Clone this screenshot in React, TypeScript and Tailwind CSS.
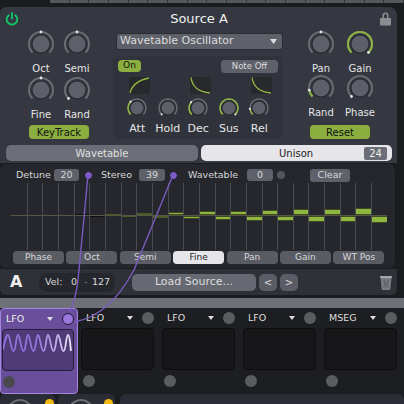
import { Fragment } from 'react';

// Arc helpers for the knobs. Angles are degrees from 12 o'clock, clockwise.
const pt = (c: number, r: number, a: number) => {
  const t = ((a - 90) * Math.PI) / 180;
  return [c + r * Math.cos(t), c + r * Math.sin(t)];
};
const arc = (c: number, r: number, from: number, to: number) => {
  const [x1, y1] = pt(c, r, from);
  const [x2, y2] = pt(c, r, to);
  return `M${x1} ${y1}A${r} ${r} 0 ${to - from > 180 ? 1 : 0} 1 ${x2} ${y2}`;
};

function Knob({ size = 30, value, on = false }: { size?: number; value: number; on?: boolean }) {
  const c = size / 2;
  const r = size === 30 ? 12 : 9;
  const inner = size === 30 ? 8.5 : 6.5;
  const [dx, dy] = pt(c, r, value);
  return (
    <svg width={size} height={size} className="block">
      <path d={arc(c, r, -135, 135)} fill="none" stroke="#6b6d72" strokeWidth={size === 30 ? 2 : 1.5} />
      {on && <path d={arc(c, r, -135, value)} fill="none" stroke="#8fb63f" strokeWidth={size === 30 ? 2 : 1.5} />}
      <circle cx={c} cy={c} r={inner + 1} fill="#26282d" />
      <circle cx={c} cy={c} r={inner} fill="#5e6069" />
      <circle cx={dx} cy={dy} r={size === 30 ? 1.4 : 1.1} fill="#e4e4e4" />
    </svg>
  );
}

function KnobLabel({ children, big = false }: { children: string; big?: boolean }) {
  return (
    <div
      className={
        big
          ? 'w-[30px] h-[14px] flex justify-center items-center text-[11px] text-[#e6e6e6] whitespace-nowrap'
          : 'w-[30px] h-[14px] flex justify-center items-center text-[10px] text-[#e6e6e6] whitespace-nowrap'
      }
    >
      {children}
    </div>
  );
}

function Env({ d, pad = false }: { d: string; pad?: boolean }) {
  return (
    <div className={pad ? 'flex justify-center pl-[5px]' : 'flex justify-center'}>
      {d && (
        <svg width="21" height="17" className="block bg-[#28292d] rounded-[2px]">
          <path d={d} fill="none" stroke="#8fb63f" strokeWidth="1.3" />
        </svg>
      )}
    </div>
  );
}

const midKnobs = [
  { label: 'Att', value: -45, on: true },
  { label: 'Hold', value: -135, on: false },
  { label: 'Dec', value: -50, on: true },
  { label: 'Sus', value: 135, on: true },
  { label: 'Rel', value: -95, on: true },
];

// 24 unison voices, first four flat on the line, then alternating up and down
const voices = Array.from({ length: 24 }, (_, i) => {
  const t = Math.max(0, (i - 3) / 20);
  return { i, up: i % 2 === 0, h: i < 4 ? 0 : Math.max(1, Math.round(t * 6)), t };
});

function Bar({ h, t }: { h: number; t: number }) {
  const bright = t > 0.3;
  return (
    <div
      className={bright ? 'bg-[#8fb63f] border-y border-[#3f4a22]' : t > 0.12 ? 'bg-[#4e5a2a]' : 'bg-[#101010]'}
      style={{ height: bright ? h + 1 : h }}
    />
  );
}

const modNames = ['LFO', 'LFO', 'LFO', 'LFO', 'MSEG'];

function Pill({ children, className }: { children: React.ReactNode; className: string }) {
  return <div className={`flex items-center justify-center ${className}`}>{children}</div>;
}

export default function App() {
  return (
    <div className="relative w-[404px] h-[404px] overflow-hidden bg-[#1b1c1f] [font-family:'DejaVu_Sans',sans-serif]">
      {/* ruler strip on top */}
      <div className="ml-[50px] h-[3px] flex bg-[#55575c]">
        {Array.from({ length: 18 }, (_, i) => (
          <div key={i} className="w-[20.7px] border-r border-[#35363a]" />
        ))}
      </div>

      <div className="mt-[4px] w-[397px] h-[156px] bg-[#353841] rounded-tr-[8px] rounded-tl-[6px]">
        {/* title */}
        <div className="h-[23px] flex items-center justify-between pl-[5px] pr-[5px]">
          <svg width="14" height="14" viewBox="0 0 14 14" fill="none" stroke="#10c868" strokeWidth="1.8" strokeLinecap="round">
            <path d="M7 1v5.5" />
            <path d="M3.7 3.2a5.3 5.3 0 1 0 6.6 0" />
          </svg>
          <div className="text-[13px] text-[#f0f0f0]">Source A</div>
          <svg width="13" height="15" viewBox="0 0 13 15" fill="#8b8d90">
            <path d="M3.5 7V4.4a3 3 0 0 1 6 0V7H8V4.4a1.5 1.5 0 0 0-3 0V7z" />
            <rect x="1" y="7" width="11" height="7.5" rx="1" />
          </svg>
        </div>

        <div className="flex h-[110px] mt-[-1px]">
          {/* left knobs */}
          <div className="w-[113px] pl-[26px]">
            <div className="flex gap-[6px]">
              <Knob value={0} />
              <Knob value={0} />
            </div>
            <div className="flex gap-[6px] mt-[2px]">
              <KnobLabel>Oct</KnobLabel>
              <KnobLabel>Semi</KnobLabel>
            </div>
            <div className="flex gap-[6px]">
              <Knob value={0} />
              <Knob value={-135} />
            </div>
            <div className="flex gap-[6px] mt-[2px]">
              <KnobLabel>Fine</KnobLabel>
              <KnobLabel>Rand</KnobLabel>
            </div>
            <div className="ml-[3px] mt-[4px] w-[60px] h-[14px] rounded-[4px] bg-[#8aaf3f] text-[#111] text-[10px] flex items-center justify-center">
              KeyTrack
            </div>
          </div>

          {/* centre column */}
          <div className="w-[170px]">
            <div className="ml-[3px] mt-[4px] h-[17px] flex items-center justify-between pl-[3px] pr-[5px] rounded-[3px] bg-[#5f616a] border border-[#2a2c31] text-[11px] text-[#dcdcdc]">
              <span>Wavetable Oscillator</span>
              <svg width="7" height="5" viewBox="0 0 7 5" fill="#dcdcdc">
                <path d="M0 0h7L3.5 5z" />
              </svg>
            </div>
            <div className="mt-[6px] h-[83px] rounded-[6px] bg-[#30333b]">
              <div className="flex justify-between px-[5px] pt-[4px]">
                <Pill className="w-[23px] h-[12px] rounded-[4px] bg-[#8aaf3f] text-[#111] text-[9px]">On</Pill>
                <Pill className="w-[57px] h-[13px] rounded-[4px] bg-[#5f616a] text-[#dcdcdc] text-[8.5px]">Note Off</Pill>
              </div>
              <div className="grid grid-cols-[repeat(5,30.5px)] ml-[9px] mt-[4px]">
                <Env pad d="M1 16C3 8 10 3 20 1" />
                <Env d="" />
                <Env pad d="M1 0C2 10 9 15 20 16" />
                <Env d="" />
                <Env pad d="M1 0C2 10 9 15 20 16" />
              </div>
              <div className="grid grid-cols-[repeat(5,30.5px)] ml-[9px] mt-[3px] justify-items-center">
                {midKnobs.map((k) => (
                  <Knob key={k.label} size={22} value={k.value} on={k.on} />
                ))}
              </div>
              <div className="grid grid-cols-[repeat(5,30.5px)] ml-[9px] mt-[3px] justify-items-center">
                {midKnobs.map((k) => (
                  <KnobLabel key={k.label} big>
                    {k.label}
                  </KnobLabel>
                ))}
              </div>
            </div>
          </div>

          {/* right knobs */}
          <div className="pl-[23px]">
            <div className="flex gap-[9px]">
              <Knob value={0} />
              <Knob value={135} on />
            </div>
            <div className="flex gap-[9px] mt-[2px]">
              <KnobLabel>Pan</KnobLabel>
              <KnobLabel>Gain</KnobLabel>
            </div>
            <div className="flex gap-[9px] mt-[-2px]">
              <Knob value={-100} on />
              <Knob value={-135} />
            </div>
            <div className="flex gap-[9px] mt-[2px]">
              <KnobLabel>Rand</KnobLabel>
              <KnobLabel>Phase</KnobLabel>
            </div>
            <div className="ml-[4px] mt-[6px] w-[60px] h-[14px] rounded-[4px] bg-[#8aaf3f] text-[#111] text-[10px] flex items-center justify-center">
              Reset
            </div>
          </div>
        </div>

        {/* tabs */}
        <div className="flex gap-[3px] pl-[6px] mt-[6px]">
          <div className="w-[192px] h-[16px] rounded-[5px] bg-[#6b6e76] text-[#e0e0e0] text-[10px] flex items-center justify-center">
            Wavetable
          </div>
          <div className="w-[191px] h-[16px] rounded-[5px] bg-[#e6e6ea] text-[#222] text-[10px] flex items-center pl-[78px] pr-[5px] justify-between">
            <span>Unison</span>
            <span className="w-[23px] h-[13px] rounded-[2px] bg-[#6b6e76] text-[#eee] flex items-center justify-center">24</span>
          </div>
        </div>
      </div>

      {/* unison sub panel */}
      <div className="mt-[1px] w-[395px] h-[104px] bg-[#25272d] rounded-[6px]">
        <div className="h-[19px] flex items-center text-[9.5px] text-[#d8d8d8] pt-[3px]">
          <span className="ml-[16px] w-[38px]">Detune</span>
          <span className="w-[25px] h-[12px] rounded-[3px] bg-[#5f616a] flex items-center justify-center">20</span>
          <span className="ml-[5px] w-[9px] h-[9px] rounded-full bg-[#7e5cc8] border border-[#1a1a1f]" />
          <span className="ml-[8px] w-[38px]">Stereo</span>
          <span className="w-[26px] h-[12px] rounded-[3px] bg-[#5f616a] flex items-center justify-center">39</span>
          <span className="ml-[4px] w-[9px] h-[9px] rounded-full bg-[#7e5cc8] border border-[#1a1a1f]" />
          <span className="ml-[10px] w-[59px]">Wavetable</span>
          <span className="w-[26px] h-[12px] rounded-[3px] bg-[#5f616a] flex items-center justify-center">0</span>
          <span className="ml-[4px] w-[8px] h-[8px] rounded-full bg-[#55565b]" />
          <span className="ml-[25px] w-[40px] h-[13px] rounded-[3px] bg-[#5f616a] flex items-center justify-center">Clear</span>
        </div>

        {/* voice sliders */}
        <div className="ml-[11px] flex h-[67px]">
          {voices.map((v) => (
            <div
              key={v.i}
              className={v.i === 0 ? 'w-[15.67px] h-full' : 'w-[15.67px] h-full border-l border-[#4a4c51]'}
            >
              <div className="h-[33px] flex flex-col justify-end border-b border-[#55583f]">
                {v.up && v.h > 0 && <Bar h={v.h} t={v.t} />}
              </div>
              <div>{!v.up && v.h > 0 && <Bar h={v.h} t={v.t} />}</div>
            </div>
          ))}
        </div>

        <div className="ml-[13px] mt-[1px] flex gap-[2.4px]">
          {['Phase', 'Oct', 'Semi', 'Fine', 'Pan', 'Gain', 'WT Pos'].map((t) => (
            <div
              key={t}
              className={
                t === 'Fine'
                  ? 'w-[51px] h-[13px] rounded-[4px] bg-[#e6e6ea] text-[#222] text-[9px] flex items-center justify-center'
                  : 'w-[51px] h-[13px] rounded-[4px] bg-[#5a5c64] text-[#d8d8d8] text-[9px] flex items-center justify-center'
              }
            >
              {t}
            </div>
          ))}
        </div>
      </div>

      {/* source footer bar */}
      <div className="mt-[1px] w-[397px] h-[26px] bg-[#2f3138] rounded-b-[6px] flex items-center text-[#dcdcdc]">
        <span className="ml-[10px] w-[29px] text-[16px] font-bold text-[#eee]">A</span>
        <div className="w-[76px] h-[19px] rounded-[8px] bg-[#25272d] flex items-center text-[9.5px] pl-[6px]">
          <span className="w-[26px]">Vel:</span>
          <span className="w-[13px]">0</span>
          <span className="w-[8px] text-[#888]">-</span>
          <span>127</span>
        </div>
        <div className="ml-[17px] w-[124px] h-[17px] rounded-[5px] bg-[#666972] flex items-center justify-center text-[11px]">
          Load Source...
        </div>
        <div className="ml-[3px] w-[18px] h-[17px] rounded-[5px] bg-[#5a5d66] flex items-center justify-center text-[10px]">&lt;</div>
        <div className="ml-[3px] w-[18px] h-[17px] rounded-[5px] bg-[#5a5d66] flex items-center justify-center text-[10px]">&gt;</div>
        <svg width="14" height="15" viewBox="0 0 14 15" className="ml-[81px]">
          <path d="M2 3h10l-1.2 11.5H3.2z" fill="#77797e" stroke="#9a9ca0" strokeWidth="0.6" />
          <rect x="1" y="1" width="12" height="2" rx="0.7" fill="#a5a7ab" />
          <path d="M4 5l6 7M10 5l-6 7M5 4l1 9M9 4l-1 9" stroke="#55575c" strokeWidth="0.6" />
        </svg>
      </div>

      <div className="mt-[3px] h-[10px] bg-[#6e7178]" />

      {/* modulator row */}
      <div className="h-[86px] flex bg-[#1d1e21]">
        {modNames.map((name, i) => (
          <Fragment key={i}>
            <div
              className={
                i === 0
                  ? 'w-[78px] shrink-0 rounded-[4px] bg-[#694e9c] border border-[#a585e2] pl-[1px]'
                  : 'w-[81px] shrink-0 ml-[3px] mr-[-3px]'
              }
            >
              <div className="h-[20px] flex items-center">
                <span className={i === 0 ? 'ml-[4px] w-[40px] text-[9.5px] text-[#eee]' : 'ml-[5px] w-[40px] text-[9.5px] text-[#ddd]'}>{name}</span>
                <svg width="6" height="4" viewBox="0 0 6 4" fill="#ddd" className="ml-[1px]">
                  <path d="M0 0h6L3 4z" />
                </svg>
                {i === 0 ? (
                  <span className="ml-[9px] w-[12px] h-[12px] rounded-full bg-[#9a78de] border border-[#1e1830]" />
                ) : (
                  <span className="ml-[9px] w-[12px] h-[12px] rounded-full bg-[#5b5c60]" />
                )}
              </div>
              <div
                className={
                  i === 0
                    ? 'w-[72px] h-[42px] rounded-[4px] border border-[#241c38] bg-[#4f3b78] overflow-hidden'
                    : 'w-[73px] h-[42px] rounded-[4px] border border-[#0e0e0f] bg-[#171719]'
                }
              >
                {i === 0 && (
                  <svg width="70" height="40" viewBox="0 0 70 40" fill="none" strokeWidth="1.8">
                    <defs>
                      <linearGradient id="wave" x1="0" x2="1" y1="0" y2="0">
                        <stop offset="0.5" stopColor="#9472dc" />
                        <stop offset="1" stopColor="#ece6fa" />
                      </linearGradient>
                    </defs>
                    <path
                      d="M0 20C2 10 3 5 5 5S8 21 10.500 21 13 5 15 5 18 21 20.500 21 23 5 25 5 28 21 30.500 21 33 5 35 5 38 21 40.500 21 43 5 45 5 48 21 50.500 21 53 5 55 5 58 21 60.500 21 63 5 65 5 67 14 68 21"
                      stroke="url(#wave)"
                    />
                  </svg>
                )}
              </div>
              <div className={i === 0 ? 'mt-[5px] ml-[1px] w-[12px] h-[12px] rounded-full bg-[#4a4a4e]' : 'mt-[5px] ml-[2px] w-[12px] h-[12px] rounded-full bg-[#5b5c60]'} />
            </div>
          </Fragment>
        ))}
      </div>

      {/* next row peeks in at the bottom */}
      <div className="h-[10px] flex gap-[3px] overflow-hidden">
        <div className="w-[55px] h-[30px] rounded-[6px] bg-[#2a2d35] flex justify-between pl-[7px] pr-[1.5px]">
          <span className="mt-[5px] w-[26px] h-[26px] rounded-full border-2 border-[#6b6d72]" />
          <span className="mt-[5px] w-[9px] h-[9px] rounded-full bg-[#f2b90f]" />
        </div>
        <div className="w-[57px] h-[30px] rounded-[6px] bg-[#2a2d35] flex justify-between pl-[10px] pr-[2.5px]">
          <span className="mt-[5px] w-[26px] h-[26px] rounded-full border-2 border-[#6b6d72]" />
          <span className="mt-[5px] w-[9px] h-[9px] rounded-full bg-[#f2b90f]" />
        </div>
        <div className="flex-1 h-[30px] ml-[2px] rounded-[6px] bg-[#2a2d35]" />
      </div>

      {/* modulation wires sit over everything */}
      <svg width="404" height="404" className="absolute inset-0 pointer-events-none" fill="none" stroke="#7a5cc0" strokeWidth="1.4">
        <path d="M88 175L79 270C78 285 75 300 70 312" />
        <path d="M173 175L134 270C118 300 98 318 74 322" />
      </svg>
    </div>
  );
}
